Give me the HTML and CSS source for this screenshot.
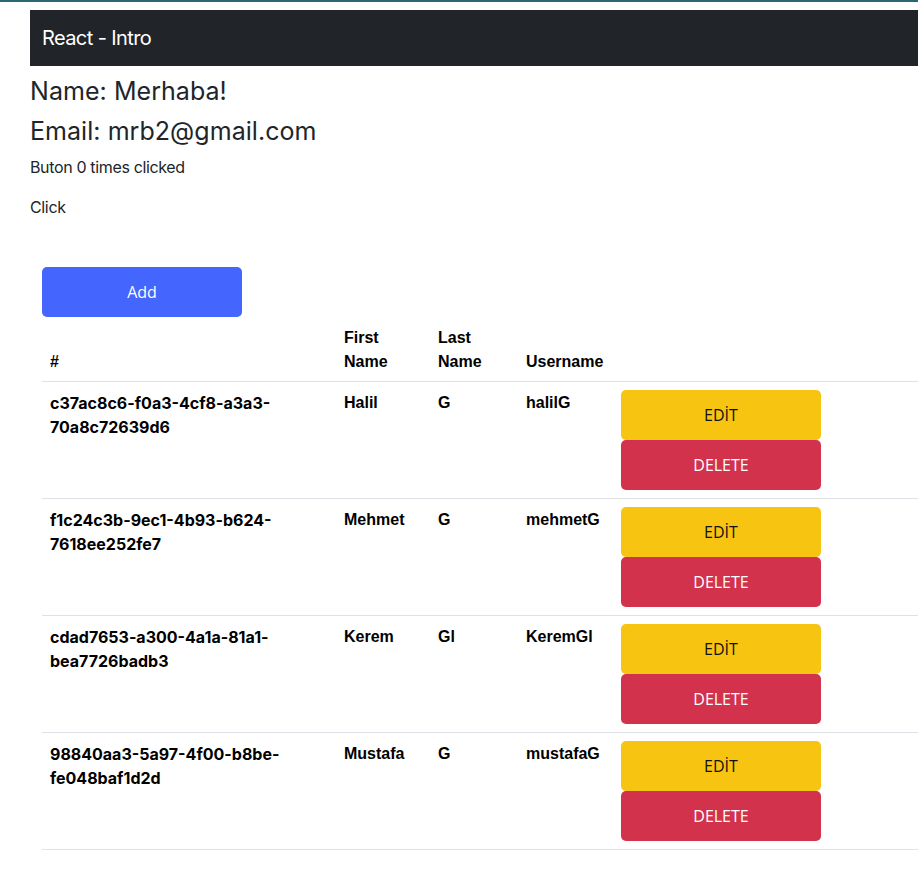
FILE: index.html
```html
<!DOCTYPE html>
<html lang="tr">
<head>
<meta charset="utf-8">
<title>React - Intro</title>
<link rel="stylesheet" href="styles.css">
</head>
<body>
<div class="topline"></div>
<div class="page">
  <nav class="navbar">React - Intro</nav>
  <h4 class="title">Name: Merhaba!</h4>
  <h4 class="title">Email: mrb2@gmail.com</h4>
  <p class="line">Buton 0 times clicked</p>
  <p class="line">Click</p>
  <div class="content">
    <button class="btn btn-add">Add</button>
    <table class="users">
      <colgroup>
        <col class="c-id"><col class="c-first"><col class="c-last"><col class="c-user"><col>
      </colgroup>
      <thead>
        <tr><th>#</th><th>First Name</th><th>Last Name</th><th>Username</th><th></th></tr>
      </thead>
      <tbody>
        <tr>
          <td class="uid">c37ac8c6-f0a3-4cf8-a3a3-70a8c72639d6</td><td>Halil</td><td>G</td><td>halilG</td>
          <td class="actions"><button class="btn btn-edit">EDİT</button><button class="btn btn-delete">DELETE</button></td>
        </tr>
        <tr>
          <td class="uid">f1c24c3b-9ec1-4b93-b624-7618ee252fe7</td><td>Mehmet</td><td>G</td><td>mehmetG</td>
          <td class="actions"><button class="btn btn-edit">EDİT</button><button class="btn btn-delete">DELETE</button></td>
        </tr>
        <tr>
          <td class="uid">cdad7653-a300-4a1a-81a1-bea7726badb3</td><td>Kerem</td><td>Gl</td><td>KeremGl</td>
          <td class="actions"><button class="btn btn-edit">EDİT</button><button class="btn btn-delete">DELETE</button></td>
        </tr>
        <tr>
          <td class="uid">98840aa3-5a97-4f00-b8be-fe048baf1d2d</td><td>Mustafa</td><td>G</td><td>mustafaG</td>
          <td class="actions"><button class="btn btn-edit">EDİT</button><button class="btn btn-delete">DELETE</button></td>
        </tr>
      </tbody>
    </table>
  </div>
</div>
</body>
</html>
```
FILE: styles.css
```css
html, body {
  margin: 0;
  padding: 0;
  background: #fff;
  overflow: hidden;
}
body {
  font-family: Inter, "Liberation Sans", Arial, sans-serif;
  color: #212529;
}
.topline {
  height: 2px;
  background: #2b6777;
}
.page {
  margin-left: 30px;
  padding-top: 8px;
}
.navbar {
  height: 56px;
  background: #212529;
  color: #fff;
  font-size: 20px;
  letter-spacing: -0.6px;
  line-height: 56px;
  padding-left: 12px;
}
.title {
  font-size: 25px;
  font-weight: 400;
  letter-spacing: 0.05px;
  line-height: 32px;
  margin: 0 0 8px;
}
.title:first-of-type {
  margin-top: 9px;
}
.line {
  font-size: 16px;
  letter-spacing: -0.35px;
  line-height: 24px;
  margin: 0 0 16px;
}
.content {
  padding: 32px 0 0 12px;
}
.btn {
  display: block;
  width: 200px;
  height: 50px;
  border: none;
  border-radius: 5px;
  font-family: "Open Sans", "Noto Sans", sans-serif;
  font-size: 16px;
  padding: 0;
  cursor: pointer;
}
.btn-add {
  background: #4466ff;
  color: #fff;
}
.btn-edit {
  background: #f6c411;
  color: #111;
}
.btn-delete {
  background: #d2324b;
  color: #fff;
}
.users {
  width: 100%;
  table-layout: fixed;
  border-collapse: collapse;
  font-family: "Liberation Sans", Arial, sans-serif;
  font-weight: 700;
  font-size: 16px;
  line-height: 24px;
  color: #000;
}
.users .uid {
  font-family: Inter, "Liberation Sans", Arial, sans-serif;
}
.c-id { width: 294px; }
.c-first { width: 94px; }
.c-last { width: 88px; }
.c-user { width: 95px; }
.users th, .users td {
  padding: 9px 8px 7px;
  text-align: left;
  vertical-align: top;
  border-bottom: 1px solid #dee2e6;
}
.users th {
  vertical-align: bottom;
}
.users td.actions {
  padding: 8px;
  height: 100px;
}
```
